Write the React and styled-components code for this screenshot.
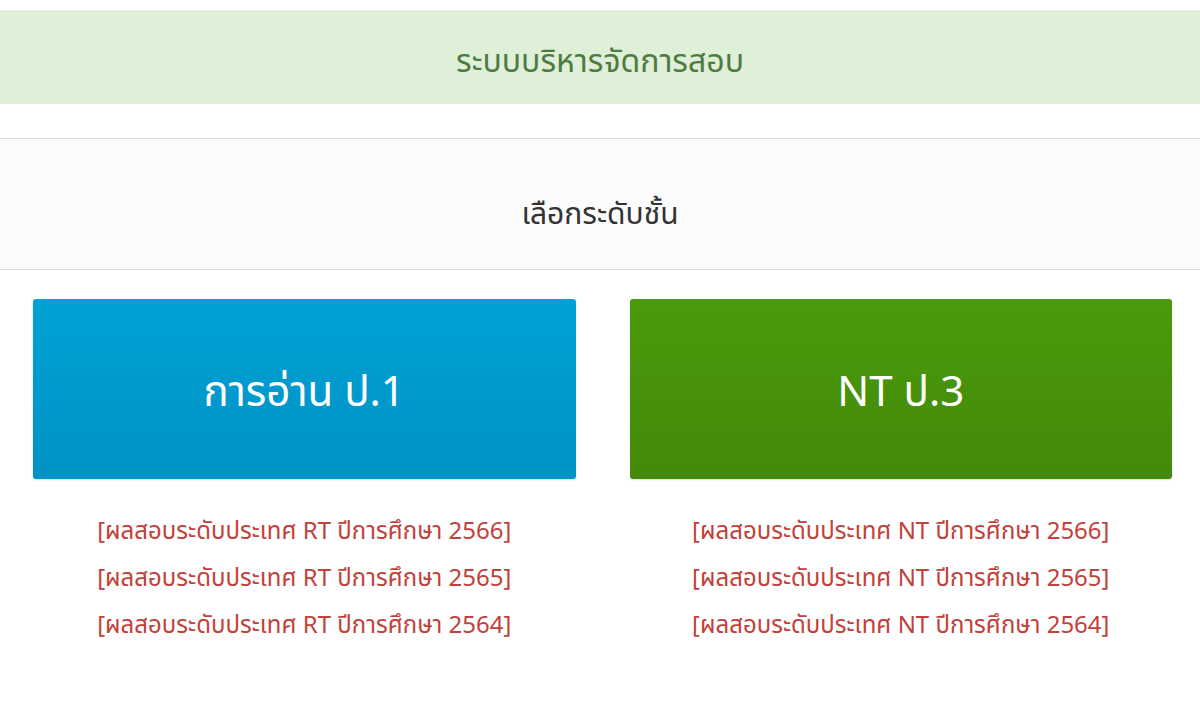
import styled, { createGlobalStyle } from 'styled-components';

const GlobalStyle = createGlobalStyle`
    body {
        margin: 0;
        background: #ffffff;
        font-family: Tahoma, "Noto Sans Thai", "Noto Sans", "DejaVu Sans", sans-serif;
    }
`;

const Page = styled.div`
    padding-top: 11px;
`;

// แถบหัวเรื่องสีเขียว
const HeaderBar = styled.div`
    height: 93px;
    box-sizing: border-box;
    padding-top: 8px;
    display: flex;
    align-items: center;
    justify-content: center;
    background-color: #dff0d8;
    border-top: 1px solid #d6e6cf;
    box-shadow: 0 -1px 2px rgba(0, 0, 0, 0.05);
    color: #4f7b43;
    font-size: 32px;
`;

const LevelBar = styled.div`
    margin-top: 34px;
    height: 132px;
    display: flex;
    align-items: center;
    justify-content: center;
    padding-top: 22px;
    box-sizing: border-box;
    background-color: #fcfcfc;
    border-top: 1px solid #dddddd;
    border-bottom: 1px solid #dddddd;
    color: #333333;
    font-size: 30px;
`;

const Columns = styled.div`
    display: grid;
    grid-template-columns: 1fr 1fr;
    gap: 54px;
    padding: 29px 28px 0 33px;
`;

const Column = styled.div`
    display: flex;
    flex-direction: column;
    align-items: center;
`;

const BigButton = styled.a`
    width: 100%;
    height: 180px;
    box-sizing: border-box;
    padding-top: 7px;
    display: flex;
    align-items: center;
    justify-content: center;
    border-radius: 3px;
    color: #ffffff;
    font-size: 42px;
    text-decoration: none;
    background: ${props => props.$tone === 'green'
        ? 'linear-gradient(to bottom, #4b9a0b, #438a09)'
        : 'linear-gradient(to bottom, #00a2d6, #0092c5)'};
    box-shadow: 0 1px 2px rgba(0, 0, 0, 0.15);
`;

const LinkList = styled.div`
    margin-top: 30px;
    display: flex;
    flex-direction: column;
    align-items: center;
`;

const ResultLink = styled.a`
    line-height: 47px;
    font-size: 24px;
    color: #c2413a;
    text-decoration: none;
`;

const years = [2566, 2565, 2564];

const LevelColumn = ({ label, tone, code }) => (
    <Column>
        <BigButton href="#" $tone={tone}>{label}</BigButton>
        <LinkList>
            {years.map(y => (
                <ResultLink href="#" key={y}>[ผลสอบระดับประเทศ {code} ปีการศึกษา {y}]</ResultLink>
            ))}
        </LinkList>
    </Column>
);

const App = () => (
    <Page>
        <GlobalStyle />
        <HeaderBar>ระบบบริหารจัดการสอบ</HeaderBar>
        <LevelBar>เลือกระดับชั้น</LevelBar>
        <Columns>
            <LevelColumn label="การอ่าน ป.1" tone="blue" code="RT" />
            <LevelColumn label="NT ป.3" tone="green" code="NT" />
        </Columns>
    </Page>
);

export default App;
